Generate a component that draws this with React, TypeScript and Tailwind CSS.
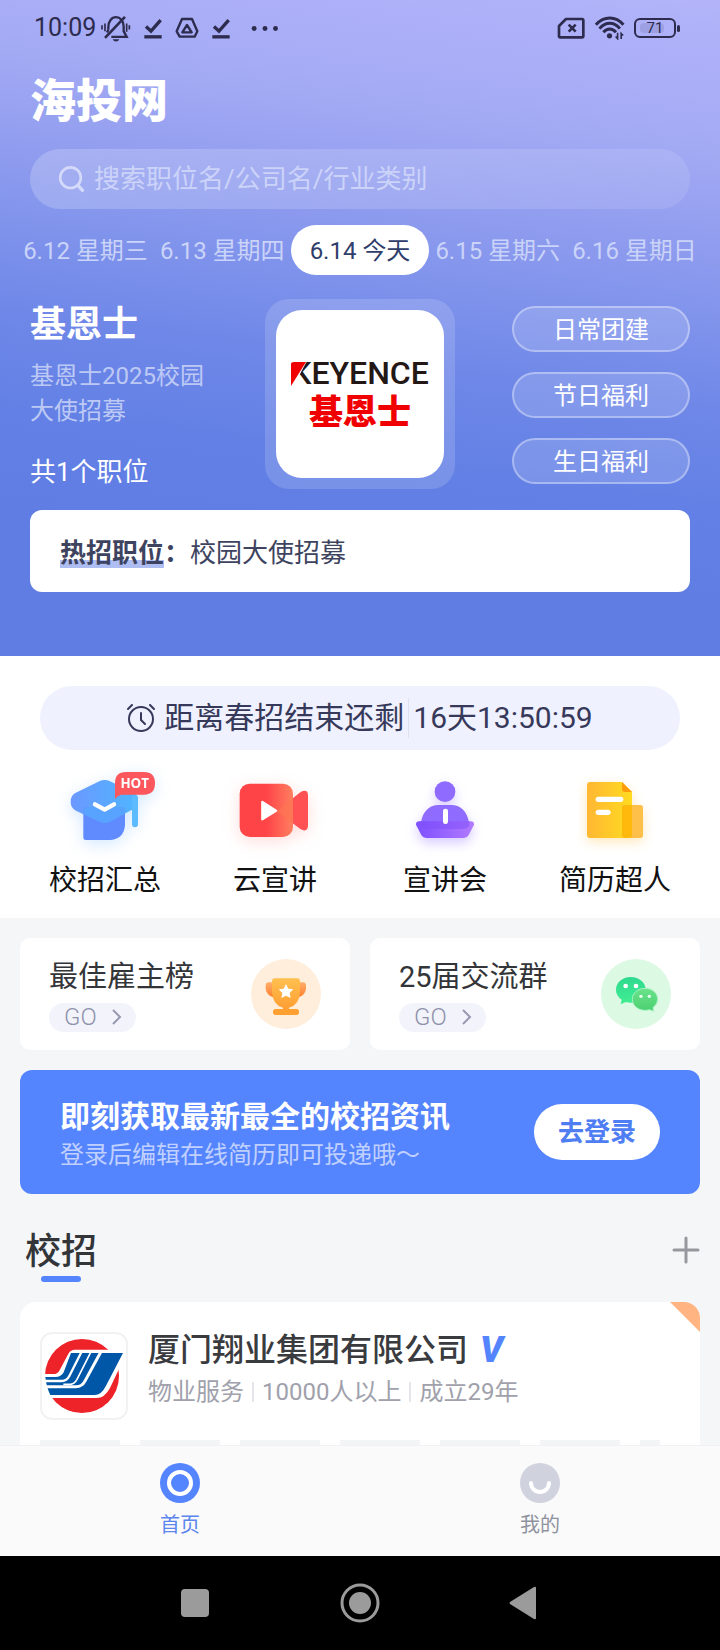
import React, { useState } from 'react';

interface DayTab {
  date: string;
  label: string;
}

interface Shortcut {
  name: string;
  icon: React.ReactNode;
}

const days: DayTab[] = [
  { date: '6.12', label: '星期三' },
  { date: '6.13', label: '星期四' },
  { date: '6.14', label: '今天' },
  { date: '6.15', label: '星期六' },
  { date: '6.16', label: '星期日' },
];

const benefits = ['日常团建', '节日福利', '生日福利'];

const SavedIcon = () => (
  <svg viewBox="430 46 60 68" className="h-[23px] w-5" fill="none" stroke="#2d2b4e" strokeWidth="10">
    <path d="M439 74 L454 88 L483 55" />
    <path d="M434 105 H486" />
  </svg>
);

function StatusBar() {
  return (
    <div className="flex h-14 items-center justify-between pl-[34px] pr-10 text-[#2d2b4e]">
      <div className="flex items-center">
        <span className="text-[25px] leading-8">10:09</span>
        <svg viewBox="302 40 96 80" className="ml-1 h-[27px] w-8" fill="none" stroke="#2d2b4e" strokeWidth="7">
          <path d="M327 84 V76 C327 58 337 46 350 46 C363 46 373 58 373 74 V88 L382 105 H336" />
          <path d="M327 84 L323 92" />
          <path d="M317 108 L377 45" strokeWidth="8" />
          <path d="M340 112 H360 Q357 119 350 119 Q343 119 340 112Z" fill="#2d2b4e" stroke="none" />
          <path d="M308 70 V83 M317 65 V88 M382 65 V90 M390 70 V83" strokeWidth="5" />
        </svg>
        <div className="ml-[11px] flex items-center gap-3">
          <SavedIcon />
          <svg viewBox="526 48 70 66" className="h-[22px] w-6" fill="none" stroke="#2d2b4e" strokeWidth="7" strokeLinejoin="round">
            <path d="M546 54 H576 L592 91 L584 107 H539 L530 91 Z" />
            <path d="M561 72 L575 94 H547 Z" />
          </svg>
          <SavedIcon />
        </div>
        <svg viewBox="756 72 80 20" className="ml-5 h-[7px] w-7" fill="#2d2b4e">
          <circle cx="765" cy="82" r="7" />
          <circle cx="796" cy="82" r="7" />
          <circle cx="826" cy="82" r="7" />
        </svg>
      </div>
      <div className="flex items-center gap-[9px]">
        <svg viewBox="592 49 84 66" className="h-[22px] w-7" fill="none" stroke="#2d2b4e" strokeWidth="8" strokeLinejoin="round">
          <path d="M619 55 H667 Q671 55 671 59 V106 Q671 110 667 110 H602 Q598 110 598 106 V76 Z" />
          <path d="M627 72 L648 93 M648 72 L627 93" />
        </svg>
        <svg viewBox="702 44 92 74" className="h-6 w-[31px]" fill="none" stroke="#2d2b4e" strokeWidth="9">
          <path d="M706 71 C731 43 767 43 791 71" />
          <path d="M717 83 C736 61 762 61 780 83" />
          <path d="M729 94 C741 81 756 81 768 94" />
          <circle cx="748" cy="105" r="8" fill="#2d2b4e" stroke="none" />
          <path d="M773 96 V114 L767 107 M784 115 V98 L790 104" strokeWidth="5" />
        </svg>
        <div className="flex items-center gap-px">
          <span className="relative flex h-5 w-[42px] items-center justify-center rounded-md border-2 border-[#2d2b4e] text-[15px] leading-4">
            <span className="absolute left-1 h-[10px] w-6 rounded-sm bg-[#8e8fd0]/50" />
            <span className="relative">71</span>
          </span>
          <span className="h-[7px] w-[3px] rounded-sm bg-[#2d2b4e]" />
        </div>
      </div>
    </div>
  );
}

function KeyenceLogo() {
  return (
    <div className="flex size-[168px] flex-col items-center justify-center rounded-[26px] bg-white">
      <p className="relative text-[32px] font-medium leading-9 text-[#231815]">
        KEYENCE
        <svg viewBox="0 0 17 26" className="absolute left-0 top-[6px] h-[26px] w-[17px]">
          <path d="M0 0 H16 L9 13 L8 26 H0 Z" fill="#fff" />
          <path d="M0 25 V3 Q0 1 3 1 H15 Z" fill="#f00000" />
        </svg>
      </p>
      <p className="text-[34px] font-black leading-[42px] text-[#f00000]">基恩士</p>
    </div>
  );
}

const CapIcon = () => (
  <svg viewBox="165 30 300 216" className="h-[72px] w-[100px] drop-shadow-[0_4px_8px_rgba(110,180,255,0.3)]">
    <defs>
      <linearGradient id="capTop" x1="0" x2="1">
        <stop offset="0" stopColor="#6b98ff" />
        <stop offset="1" stopColor="#4fb6ff" />
      </linearGradient>
    </defs>
    <path d="M298 61 Q314 53 330 61 L402 96 Q414 102 414 118 Q414 136 400 144 L330 182 Q314 190 298 182 L228 149 Q212 141 212 122 Q212 104 226 96 Z" fill="url(#capTop)" />
    <path d="M250 148 Q252 138 266 138 H360 Q375 138 375 150 V192 Q372 233 332 237 H257 Q250 237 250 230 Z" fill="#608bff" />
    <path d="M250 150 Q252 138 266 138 H360 Q375 138 375 150 V158 L330 182 Q314 190 298 182 L250 160 Z" fill="#57a3ff" />
    <path d="M405 112 V190" stroke="#5cbaff" strokeWidth="18" strokeLinecap="round" />
    <path d="M285 130 L314 146 L342 130" fill="none" stroke="#fff" strokeWidth="13" strokeLinecap="round" strokeLinejoin="round" />
    <path d="M345 114 V66 Q345 33 378 33 H432 Q465 33 465 67 Q465 101 432 101 H364 Q352 104 345 114 Z" fill="#fb575c" />
    <text x="404" y="81" textAnchor="middle" fontFamily="Open Sans, sans-serif" fontWeight="700" fontSize="40" fill="#fff">HOT</text>
  </svg>
);

const CameraIcon = () => (
  <svg viewBox="675 30 300 216" className="h-[72px] w-[100px] drop-shadow-[0_4px_8px_rgba(255,120,110,0.25)]">
    <defs>
      <linearGradient id="camBody" x1="0" x2="1">
        <stop offset="0.5" stopColor="#ff4448" />
        <stop offset="1" stopColor="#ff7f60" />
      </linearGradient>
    </defs>
    <path d="M830 150 L902 93 Q924 82 924 104 V193 Q924 215 902 205 Z" fill="#ff5054" />
    <rect x="719" y="68" width="160" height="160" rx="30" fill="url(#camBody)" />
    <path d="M830 150 L879 111 V188 Z" fill="#ff7552" opacity="0.7" />
    <path d="M787 123 L828 149 L787 175 Z" fill="#fff" stroke="#fff" strokeWidth="7" strokeLinejoin="round" />
  </svg>
);

const SpeakerIcon = () => (
  <svg viewBox="105 30 300 216" className="h-[72px] w-[100px] drop-shadow-[0_5px_6px_rgba(143,107,255,0.35)]">
    <defs>
      <linearGradient id="desk" x1="0" x2="1">
        <stop offset="0" stopColor="#7d50ff" />
        <stop offset="1" stopColor="#b27aff" />
      </linearGradient>
    </defs>
    <circle cx="255" cy="92" r="31" fill="#8f6bff" />
    <path d="M182 190 C188 146 212 132 236 132 H274 C300 132 322 148 328 190 Z" fill="#8f6bff" />
    <path d="M168 191 Q168 181 178 181 H332 Q342 181 342 191 L326 222 Q321 231 312 231 H198 Q189 231 184 222 Z" fill="url(#desk)" />
    <path d="M181 181 H329 Q330 204 310 204 H200 Q181 204 181 181 Z" fill="#7d4dfa" opacity="0.5" />
    <rect x="249" y="143" width="15" height="46" rx="7" fill="#fff" />
  </svg>
);

const ResumeIcon = () => (
  <svg viewBox="615 30 300 216" className="h-[72px] w-[100px] drop-shadow-[0_4px_6px_rgba(255,190,60,0.35)]">
    <defs>
      <linearGradient id="paper" x1="0" x2="1">
        <stop offset="0" stopColor="#ffb733" />
        <stop offset="1" stopColor="#ffdb20" />
      </linearGradient>
    </defs>
    <path d="M681 72 Q681 63 690 63 H786 L816 93 V222 Q816 231 807 231 H690 Q681 231 681 222 Z" fill="url(#paper)" />
    <path d="M786 63 L816 93 H795 Q786 93 786 84 Z" fill="#ff9c0a" />
    <rect x="786" y="132" width="63" height="99" rx="8" fill="#ffc04a" />
    <path d="M786 140 Q786 132 794 132 H816 V222 Q816 231 807 231 H794 Q786 231 786 223 Z" fill="#ffb90c" />
    <rect x="707" y="107" width="83" height="16" rx="8" fill="#fff" />
    <rect x="707" y="146" width="45" height="16" rx="8" fill="#fff" />
  </svg>
);

const TrophyIcon = () => (
  <svg viewBox="753 120 210 210" className="size-[70px]">
    <defs>
      <linearGradient id="cup" x1="0" x2="0" y1="0" y2="1">
        <stop offset="0" stopColor="#ffc04f" />
        <stop offset="1" stopColor="#ff9d33" />
      </linearGradient>
      <linearGradient id="handle" x1="0" x2="0" y1="0" y2="1">
        <stop offset="0" stopColor="#ffae6a" />
        <stop offset="1" stopColor="#ff7f2a" />
      </linearGradient>
    </defs>
    <circle cx="858" cy="225" r="105" fill="#ffeedb" />
    <path d="M822 190 H807 Q797 190 797 200 V209 Q799 230 826 236 Z" fill="url(#handle)" />
    <path d="M894 190 H908 Q918 190 918 200 V209 Q916 230 890 236 Z" fill="url(#handle)" />
    <path d="M816 187 Q816 178 825 178 H891 Q900 178 900 187 V218 Q898 258 867 266 V273 H849 V266 Q818 258 816 218 Z" fill="url(#cup)" />
    <rect x="819" y="270" width="78" height="18" rx="8" fill="#ffa030" />
    <path d="M858 195 L865 209 L880 211 L869 222 L872 237 L858 230 L844 237 L847 222 L836 211 L851 209 Z" fill="#fff" />
  </svg>
);

const WechatIcon = () => (
  <svg viewBox="723 114 210 210" className="size-[70px]">
    <defs>
      <linearGradient id="bubbleA" x1="0" x2="0" y1="0" y2="1">
        <stop offset="0" stopColor="#2ed98f" />
        <stop offset="1" stopColor="#41ee92" />
      </linearGradient>
      <linearGradient id="bubbleB" x1="0" x2="0" y1="0" y2="1">
        <stop offset="0" stopColor="#6be38b" />
        <stop offset="1" stopColor="#4bcf70" />
      </linearGradient>
    </defs>
    <circle cx="828" cy="219" r="105" fill="#dcf9e4" />
    <path d="M812 168 C838 168 857 185 857 206 C857 228 838 245 812 245 Q804 245 798 243 L782 250 L785 236 Q768 224 768 206 C768 185 787 168 812 168 Z" fill="url(#bubbleA)" />
    <path d="M855 202 C878 202 893 217 893 235 Q893 249 879 260 L881 271 L868 266 Q862 268 855 268 C833 268 817 253 817 235 C817 217 833 202 855 202 Z" fill="url(#bubbleB)" stroke="#a9f3c4" strokeWidth="3" />
    <circle cx="797" cy="195" r="7" fill="#fff" />
    <circle cx="828" cy="195" r="7" fill="#fff" />
    <circle cx="843" cy="226" r="5" fill="#e6ffee" />
    <circle cx="868" cy="226" r="5" fill="#e6ffee" />
  </svg>
);

const CompanyLogo = () => (
  <svg viewBox="126 369 252 252" className="size-full">
    <circle cx="246" cy="495" r="111" fill="#ee2329" />
    <path d="M128 489 H160 Q172 489 178 479 L206 427 Q212 416 224 416 H384 L330 531 Q314 561 290 561 H128 Z" fill="#fff" />
    <path d="M213 426 H369 L318 524 Q304 552 284 552 H151 Q139 528 136 498 H166 Q184 498 191 484 Z" fill="#0056a7" />
    <path d="M130 510 H186 Q200 510 208 495 L244 424" fill="none" stroke="#fff" strokeWidth="7" />
    <path d="M130 527 H228 Q246 527 254 512 L302 424" fill="none" stroke="#fff" strokeWidth="9" />
    <path d="M190 520 H212 Q224 518 231 505 L272 424" fill="none" stroke="#fff" strokeWidth="5" />
  </svg>
);

const shortcuts: Shortcut[] = [
  { name: '校招汇总', icon: <CapIcon /> },
  { name: '云宣讲', icon: <CameraIcon /> },
  { name: '宣讲会', icon: <SpeakerIcon /> },
  { name: '简历超人', icon: <ResumeIcon /> },
];

const promos: Shortcut[] = [
  { name: '最佳雇主榜', icon: <TrophyIcon /> },
  { name: '25届交流群', icon: <WechatIcon /> },
];

export default function App() {
  const [activeDay, setActiveDay] = useState('6.14');
  const [keyword, setKeyword] = useState('');

  return (
    <div className="flex h-screen flex-col bg-[#f4f6f8] font-[Roboto,'Noto_Sans_CJK_SC',sans-serif] text-[#333538]">
      <main className="min-h-0 flex-1 overflow-y-auto [scrollbar-width:none]">
        <header className="bg-[linear-gradient(188deg,#b3b4fa_0%,#a3aaf4_20%,#919def_32%,#8194ec_42%,#6f88e8_54%,#6280e5_68%,#607de4_80%)] pb-16">
          <StatusBar />
          <div className="px-[30px] pt-[22px]">
            <h1 className="text-[46px] font-black leading-[46px] text-white">海投网</h1>
            <label className="mt-[25px] flex h-[60px] items-center rounded-full bg-linear-to-r from-white/20 to-white/10 pl-7">
              <svg viewBox="172 492 80 84" className="h-7 w-[27px]" fill="none" stroke="#d5dafa" strokeWidth="8" strokeLinecap="round">
                <circle cx="209" cy="530" r="31" />
                <path d="M232 554 L245 568" strokeWidth="10" />
              </svg>
              <input
                type="text"
                aria-label="搜索"
                value={keyword}
                onChange={(e) => setKeyword(e.target.value)}
                placeholder="搜索职位名/公司名/行业类别"
                className="ml-[9px] min-w-0 flex-1 bg-transparent text-[26px] text-white outline-none placeholder:text-[#ccd3f9]"
              />
            </label>
          </div>

          <nav className="mt-4 flex justify-center whitespace-nowrap text-2xl">
            {days.map((day) => (
              <button
                key={day.date}
                type="button"
                onClick={() => setActiveDay(day.date)}
                className={
                  day.date === activeDay
                    ? 'h-[50px] rounded-full bg-white px-[19px] pt-[2px] text-[#2f3d6b]'
                    : 'h-[50px] px-[6px] pt-[2px] text-[#cad3f8]'
                }
              >
                {day.date} {day.label}
              </button>
            ))}
          </nav>

          <section className="mt-6 grid grid-cols-[1fr_190px_1fr] px-[30px]">
            <div className="flex flex-col pt-[6px] text-white">
              <h2 className="text-4xl font-bold leading-10">基恩士</h2>
              <p className="mt-[14px] max-w-[190px] text-2xl leading-[35px] text-[#bdc9f5]">基恩士2025校园大使招募</p>
              <p className="mt-[25px] text-[26px] leading-9">共1个职位</p>
            </div>
            <div className="flex size-[190px] items-center justify-center rounded-3xl bg-white/15">
              <KeyenceLogo />
            </div>
            <div className="flex flex-col items-end justify-center gap-5">
              {benefits.map((benefit) => (
                <span
                  key={benefit}
                  className="flex h-[46px] w-[178px] items-center justify-center rounded-full border-2 border-white/35 bg-white/15 pt-[2px] text-2xl text-white"
                >
                  {benefit}
                </span>
              ))}
            </div>
          </section>

          <div className="mx-[30px] mt-5 flex h-[82px] items-center rounded-xl bg-white px-[30px] pt-1 text-[26px] text-[#3e4460]">
            <strong className="font-bold leading-8">
              <span className="bg-[linear-gradient(to_top,#aebdf2_8px,transparent_8px)]">热招职位</span>：
            </strong>
            <span>校园大使招募</span>
          </div>
        </header>

        <section className="bg-white px-5 pb-[17px] pt-[30px]">
          <div className="mx-5 flex h-16 items-center justify-center rounded-full bg-[#eff1fe] text-3xl text-[#37395a]">
            <svg viewBox="0 0 28 28" className="mr-[9px] size-7" fill="none" stroke="#37395a" strokeWidth="2" strokeLinecap="round">
              <circle cx="14" cy="15" r="12" />
              <path d="M14 9 V16 L18 20" />
              <path d="M1 5 L5 1 M23 1 L27 5" />
            </svg>
            <span>距离春招结束还剩</span>
            <span className="mx-1 h-10 w-px bg-[#dfe1ef]" />
            <span>16天13:50:59</span>
          </div>
          <div className="mt-[21px] grid grid-cols-4">
            {shortcuts.map((item) => (
              <button key={item.name} type="button" className="flex flex-col items-center">
                {item.icon}
                <span className="mt-[18px] text-[28px] leading-10 text-[#111111]">{item.name}</span>
              </button>
            ))}
          </div>
        </section>

        <div className="px-5 pt-5">
          <div className="grid grid-cols-2 gap-5">
            {promos.map((promo) => (
              <button key={promo.name} type="button" className="flex h-28 items-center justify-between rounded-[10px] bg-white px-[29px]">
                <span className="flex flex-col items-start">
                  <span className="text-[29px] leading-10">{promo.name}</span>
                  <span className="mt-[6px] flex h-[29px] items-center gap-[14px] rounded-full bg-[#f3f4fb] pl-[15px] pr-[13px] text-2xl font-light leading-7 text-[#8f92ab]">
                    GO
                    <svg viewBox="0 0 12 18" className="h-[18px] w-3" fill="none" stroke="#9699b0" strokeWidth="2">
                      <path d="M2 2 L9 9 L2 16" />
                    </svg>
                  </span>
                </span>
                {promo.icon}
              </button>
            ))}
          </div>

          <section className="mt-5 flex h-[124px] items-center justify-between rounded-xl bg-[#5584ff] px-10">
            <div className="pt-[6px]">
              <h2 className="text-3xl font-bold leading-10 text-white">即刻获取最新最全的校招资讯</h2>
              <p className="text-2xl leading-9 text-[#c0d1ff]">登录后编辑在线简历即可投递哦～</p>
            </div>
            <button type="button" className="h-14 w-[126px] rounded-full bg-white text-[26px] font-bold text-[#4f7df3]">
              去登录
            </button>
          </section>

          <div className="mt-9 flex items-start justify-between pl-[5px]">
            <div className="flex flex-col items-center">
              <h2 className="text-4xl font-medium leading-[45px]">校招</h2>
              <span className="mt-px h-[6px] w-10 rounded-full bg-[#5584ff]" />
            </div>
            <button type="button" aria-label="添加" className="mt-[6px]">
              <svg viewBox="0 0 28 28" className="size-7" stroke="#97989e" strokeWidth="3" strokeLinecap="round">
                <path d="M14 2 V26 M2 14 H26" />
              </svg>
            </button>
          </div>

          <article className="relative mt-5 overflow-hidden rounded-2xl bg-white px-5 pb-10 pt-[30px]">
            <svg viewBox="0 0 30 30" className="absolute right-0 top-0 size-[30px]">
              <path d="M0 0 H30 V30 Z" fill="#ffb481" />
            </svg>
            <div className="flex gap-5">
              <div className="size-[88px] shrink-0 overflow-hidden rounded-xl border-2 border-[#f2f2f3]">
                <CompanyLogo />
              </div>
              <div>
                <h3 className="flex items-center gap-3 text-[32px] font-medium leading-9 text-[#3a3b3f]">
                  厦门翔业集团有限公司
                  <span className="text-4xl font-black italic leading-9 text-[#5584ff]">V</span>
                </h3>
                <p className="mt-2 flex items-center gap-2 text-2xl leading-8 text-[#a0a1ab]">
                  <span>物业服务</span>
                  <span className="h-5 w-[2px] bg-[#e4e5ea]" />
                  <span>10000人以上</span>
                  <span className="h-5 w-[2px] bg-[#e4e5ea]" />
                  <span>成立29年</span>
                </p>
              </div>
            </div>
            <div className="mr-5 mt-5 flex gap-5 overflow-hidden">
              {[1, 2, 3, 4, 5, 6, 7].map((n) => (
                <span key={n} className="h-10 w-20 shrink-0 bg-[#f3f4f6]" />
              ))}
            </div>
          </article>
        </div>
      </main>

      <nav className="grid grid-cols-2 border-t border-[#f1f1f4] bg-[#fafafa] py-[17px] text-xl leading-7">
        <a href="#home" className="flex flex-col items-center text-[#5c85ee]">
          <svg viewBox="0 0 40 40" className="mb-2 size-10">
            <circle cx="20" cy="20" r="20" fill="#5584ff" />
            <circle cx="20" cy="20" r="11" fill="none" stroke="#fff" strokeWidth="4" />
          </svg>
          首页
        </a>
        <a href="#mine" className="flex flex-col items-center text-[#8f929e]">
          <svg viewBox="0 0 40 40" className="mb-2 size-10">
            <circle cx="20" cy="20" r="20" fill="#d0d3dd" />
            <path d="M11 20 A9 9 0 0 0 29 20" fill="none" stroke="#fff" strokeWidth="4" strokeLinecap="round" />
          </svg>
          我的
        </a>
      </nav>

      <div className="flex h-[94px] shrink-0 items-center justify-center gap-[125px] bg-black">
        <button type="button" aria-label="最近任务">
          <svg viewBox="0 0 40 40" className="size-10" fill="#9b9b9b">
            <rect x="6" y="6" width="28" height="28" rx="4" />
          </svg>
        </button>
        <button type="button" aria-label="主屏幕">
          <svg viewBox="0 0 40 40" className="size-10">
            <circle cx="20" cy="20" r="18" fill="none" stroke="#9b9b9b" strokeWidth="3" />
            <circle cx="20" cy="20" r="11" fill="#9b9b9b" />
          </svg>
        </button>
        <button type="button" aria-label="返回">
          <svg viewBox="0 0 40 40" className="size-10" fill="#9b9b9b">
            <path d="M5 19 L29 4 Q31 3 31 5 V35 Q31 37 29 36 L5 21 Q4 20 5 19 Z" />
          </svg>
        </button>
      </div>
    </div>
  );
}
